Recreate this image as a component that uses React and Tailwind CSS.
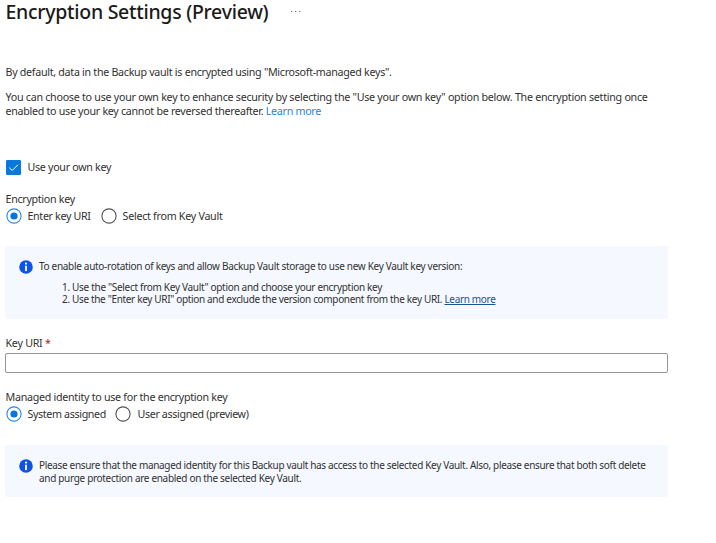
import { useState } from 'react';

function InfoIcon() {
  return (
    <svg className="mt-[0.5px] size-[14px] shrink-0" viewBox="0 0 14 14" aria-hidden="true">
      <circle cx="7" cy="7" r="6.8" fill="#0f52e6" />
      <circle cx="7" cy="3.6" r="1.1" fill="#fff" />
      <rect x="6.1" y="5.7" width="1.8" height="5.4" fill="#fff" />
    </svg>
  );
}

function Radio({ checked, onSelect, children }) {
  return (
    <button type="button" role="radio" aria-checked={checked} onClick={onSelect} className="flex h-4 items-center gap-1.5 whitespace-nowrap">
      <svg className="size-4 shrink-0" viewBox="0 0 16 16" aria-hidden="true">
        <circle cx="8" cy="8" r="7.1" fill="#fff" stroke={checked ? '#2a8ae0' : '#55534f'} strokeWidth="1.1" />
        {checked && <circle cx="8" cy="8" r="3.6" fill="#0874dc" />}
      </svg>
      {children}
    </button>
  );
}

export default function App() {
  const [source, setSource] = useState('uri');
  const [identity, setIdentity] = useState('system');
  return (
    <main className="h-[543px] w-[716px] bg-white pl-[5.5px] font-['Noto_Sans','Open_Sans',sans-serif] text-[10.7px] leading-[14px] text-[#323130]">
      <header className="flex h-[24px] items-start gap-[22px]">
        <h1 className="text-[19.5px] leading-[23px] font-medium whitespace-nowrap text-[#1b1a19]">
          <span className="tracking-[-0.28px]">Encryption Settings (Preview)</span>
        </h1>
        <svg className="mt-[10px] h-[3px] w-[11px]" viewBox="0 0 11 3" fill="#77756f" aria-label="More">
          <rect x="1" y="1" width="1.3" height="1" />
          <rect x="5" y="1" width="1.3" height="1" />
          <rect x="9" y="1" width="1.3" height="1" />
        </svg>
      </header>

      <section className="pt-[41px] whitespace-nowrap">
        <p><span className="tracking-[-0.29px]">By default, data in the Backup vault is encrypted using "Microsoft-managed keys".</span></p>
        <p className="pt-[11px]">
          <span className="tracking-[-0.265px]">You can choose to use your own key to enhance security by selecting the "Use your own key" option below. The encryption setting once</span>
          <br />
          <span className="tracking-[-0.29px]">enabled to use your key cannot be reversed thereafter. <a className="text-[#1a86e0]">Learn more</a></span>
        </p>
      </section>

      <label className="mt-[42px] flex h-[15px] items-center gap-[6.5px] pl-[0.5px]">
        <svg className="size-[15px]" viewBox="0 0 15 15" aria-hidden="true">
          <rect width="15" height="15" rx="1.2" fill="#0877de" />
          <path d="M3.3 7.7 6.2 10.5 11.9 4.8" fill="none" stroke="#fff" strokeWidth="1" />
        </svg>
        <span className="-mt-px tracking-[-0.3px]">Use your own key</span>
      </label>

      <section className="pt-[17px]">
        <p><span className="tracking-[-0.3px]">Encryption key</span></p>
        <div className="mt-[2px] flex gap-[10px]">
          <Radio checked={source === 'uri'} onSelect={() => setSource('uri')}><span className="tracking-[-0.34px]">Enter key URI</span></Radio>
          <Radio checked={source === 'vault'} onSelect={() => setSource('vault')}><span className="tracking-[-0.27px]">Select from Key Vault</span></Radio>
        </div>
      </section>

      <section className="mt-[22px] -ml-[0.5px] flex h-[73px] w-[663px] gap-[6px] rounded-[2px] bg-[#f5f8ff] pt-[13px] pl-[14px] text-[10px] leading-[12.5px] whitespace-nowrap">
        <InfoIcon />
        <div className="pt-px">
          <p><span className="tracking-[-0.305px]">To enable auto-rotation of keys and allow Backup Vault storage to use new Key Vault key version:</span></p>
          <ol className="pt-2 pl-[23px]">
            <li><span className="tracking-[-0.305px]">1. Use the "Select from Key Vault" option and choose your encryption key</span></li>
            <li><span className="tracking-[-0.335px]">2. Use the "Enter key URI" option and exclude the version component from the key URI. <a className="text-[#1c5291] underline">Learn more</a></span></li>
          </ol>
        </div>
      </section>

      <section className="pt-[17px]">
        <label htmlFor="key-uri" className="block"><span className="tracking-[-0.25px]">Key URI <span className="text-[#a4262c]">*</span></span></label>
        <input id="key-uri" className="mt-[3px] -ml-[0.5px] block h-5 w-[663px] rounded-[2px] border border-[#979593] bg-white px-2 outline-none" />
      </section>

      <section className="pt-[17px]">
        <p><span className="tracking-[-0.28px]">Managed identity to use for the encryption key</span></p>
        <div className="mt-[2px] flex gap-[9.5px]">
          <Radio checked={identity === 'system'} onSelect={() => setIdentity('system')}><span className="tracking-[-0.36px]">System assigned</span></Radio>
          <Radio checked={identity === 'user'} onSelect={() => setIdentity('user')}><span className="tracking-[-0.35px]">User assigned (preview)</span></Radio>
        </div>
      </section>

      <section className="mt-[23px] -ml-[0.5px] flex h-[52px] w-[663px] gap-[6px] rounded-[2px] bg-[#f5f8ff] pt-[13px] pl-[14px] text-[10px] leading-[12.5px] whitespace-nowrap">
        <InfoIcon />
        <p className="pt-px">
          <span className="tracking-[-0.33px]">Please ensure that the managed identity for this Backup vault has access to the selected Key Vault. Also, please ensure that both soft delete</span>
          <br />
          <span className="tracking-[-0.315px]">and purge protection are enabled on the selected Key Vault.</span>
        </p>
      </section>
    </main>
  );
}
